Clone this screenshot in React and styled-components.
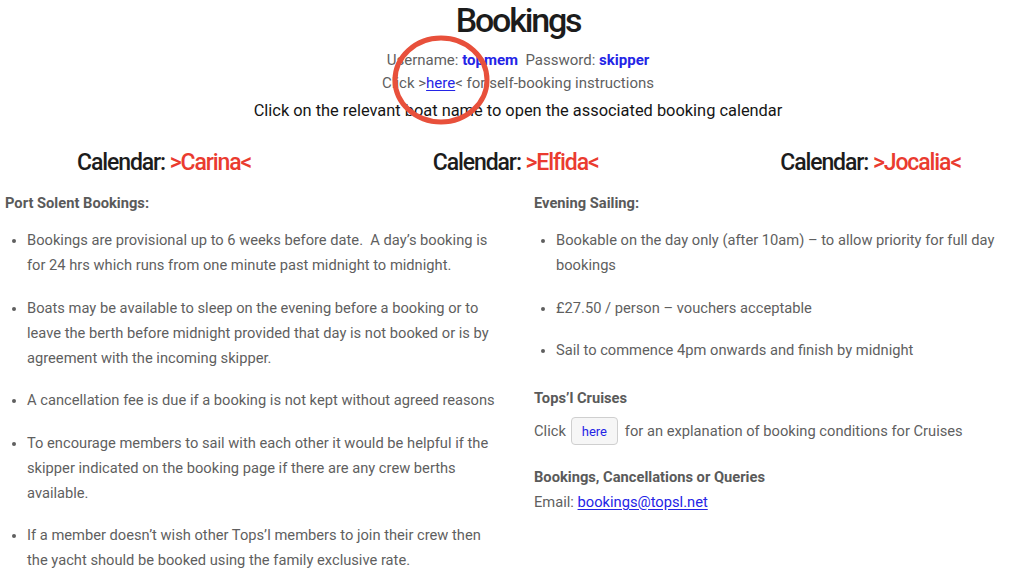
import React from 'react';
import styled, { createGlobalStyle } from 'styled-components';

const GlobalStyle = createGlobalStyle`
  html, body {
    margin: 0;
    padding: 0;
    background: #ffffff;
  }
  body {
    font-family: "Roboto", "Liberation Sans", sans-serif;
    color: #5a5a5a;
  }
`;

const Page = styled.div`
  position: relative;
  width: 1024px;
  height: 585px;
  overflow: hidden;
`;

const Header = styled.header`
  display: flex;
  flex-direction: column;
  align-items: center;
  padding-left: 12px;
`;

const Title = styled.h1`
  margin: 0;
  font-family: "Roboto", sans-serif;
  font-size: 34px;
  font-weight: 500;
  color: #1c1c1c;
  line-height: 40px;
  letter-spacing: -2.2px;
`;

const Info = styled.div`
  font-size: 15px;
  line-height: 23px;
  color: #5f5f5f;
  margin-top: ${p => p.first ? '9px' : '0'};
`;

const Cred = styled.b`
  color: #2424e6;
  font-weight: 700;
`;

const Link = styled.a`
  color: #2424e6;
  text-decoration: underline;
  text-underline-offset: 2px;
`;

const Lead = styled.div`
  font-size: 16.4px;
  line-height: 26px;
  color: #151515;
  margin-top: 3px;
`;

const CalendarRow = styled.div`
  display: flex;
  justify-content: space-between;
  padding: 0 63px 0 77px;
  margin-top: 24px;
`;

const CalendarTitle = styled.h2`
  margin: 0;
  font-family: "Roboto", sans-serif;
  font-size: 23px;
  font-weight: 500;
  line-height: 30px;
  letter-spacing: -1.1px;
  color: #1c1c1c;
`;

const Boat = styled.span`
  color: #ea3b2f;
`;

const Columns = styled.div`
  display: grid;
  grid-template-columns: 529px 1fr;
  padding-left: 5px;
  margin-top: 13px;
`;

const Column = styled.section`
  display: flex;
  flex-direction: column;
`;

const SectionTitle = styled.h3`
  margin: ${p => p.gap || '0'} 0 0;
  font-size: 14.7px;
  font-weight: 700;
  line-height: 25px;
  color: #5a5a5a;
`;

const List = styled.ul`
  margin: 12px 0 0;
  padding-left: 22px;
  width: ${p => p.width};
  display: flex;
  flex-direction: column;
  gap: 17.5px;
`;

const Item = styled.li`
  font-size: 14.7px;
  line-height: 25px;
  color: #5f5f5f;
  &::marker {
    font-size: 13px;
  }
`;

const Line = styled.div`
  font-size: 14.7px;
  line-height: 25px;
  color: #5f5f5f;
  display: flex;
  align-items: center;
  margin-top: ${p => p.gap || '0'};
`;

const HereButton = styled.button`
  margin: 0 7px 0 5px;
  width: 47px;
  height: 28px;
  font-family: "Roboto", sans-serif;
  font-size: 13px;
  color: #2424e6;
  background: #f6f6f6;
  border: 1px solid #cfcfcf;
  border-radius: 4px;
  padding: 0;
`;

const Ring = styled.svg`
  position: absolute;
  left: 390px;
  top: 34px;
  pointer-events: none;
`;

export default function App() {
  return (
    <Page>
      <GlobalStyle />
      <Header>
        <Title>Bookings</Title>
        <Info first>
          Username: <Cred>topmem</Cred>&nbsp; Password: <Cred>skipper</Cred>
        </Info>
        <Info>
          Click &gt;<Link href="#">here</Link>&lt; for self-booking instructions
        </Info>
        <Lead>Click on the relevant boat name to open the associated booking calendar</Lead>
      </Header>

      <CalendarRow>
        <CalendarTitle>Calendar: <Boat>&gt;Carina&lt;</Boat></CalendarTitle>
        <CalendarTitle>Calendar: <Boat>&gt;Elfida&lt;</Boat></CalendarTitle>
        <CalendarTitle>Calendar: <Boat>&gt;Jocalia&lt;</Boat></CalendarTitle>
      </CalendarRow>

      <Columns>
        <Column>
          <SectionTitle>Port Solent Bookings:</SectionTitle>
          <List width="477px">
            <Item>Bookings are provisional up to 6 weeks before date.&nbsp; A day’s booking is for 24 hrs which runs from one minute past midnight to midnight.</Item>
            <Item>Boats may be available to sleep on the evening before a booking or to leave the berth before midnight provided that day is not booked or is by agreement with the incoming skipper.</Item>
            <Item>A cancellation fee is due if a booking is not kept without agreed reasons</Item>
            <Item>To encourage members to sail with each other it would be helpful if the skipper indicated on the booking page if there are any crew berths available.</Item>
            <Item>If a member doesn’t wish other Tops’l members to join their crew then the yacht should be booked using the family exclusive rate.</Item>
          </List>
        </Column>
        <Column>
          <SectionTitle>Evening Sailing:</SectionTitle>
          <List width="440px">
            <Item>Bookable on the day only (after 10am) – to allow priority for full day bookings</Item>
            <Item>£27.50 / person – vouchers acceptable</Item>
            <Item>Sail to commence 4pm onwards and finish by midnight</Item>
          </List>
          <SectionTitle gap="23px">Tops’l Cruises</SectionTitle>
          <Line gap="6px">
            Click <HereButton>here</HereButton> for an explanation of booking conditions for Cruises
          </Line>
          <SectionTitle gap="20px">Bookings, Cancellations or Queries</SectionTitle>
          <Line>
            Email:&nbsp;<Link href="#">bookings@topsl.net</Link>
          </Line>
        </Column>
      </Columns>

      <Ring width="102" height="92" viewBox="0 0 102 92">
        <ellipse cx="51" cy="46" rx="46" ry="42" fill="none" stroke="#e8503b" strokeWidth="5" />
      </Ring>
    </Page>
  );
}
